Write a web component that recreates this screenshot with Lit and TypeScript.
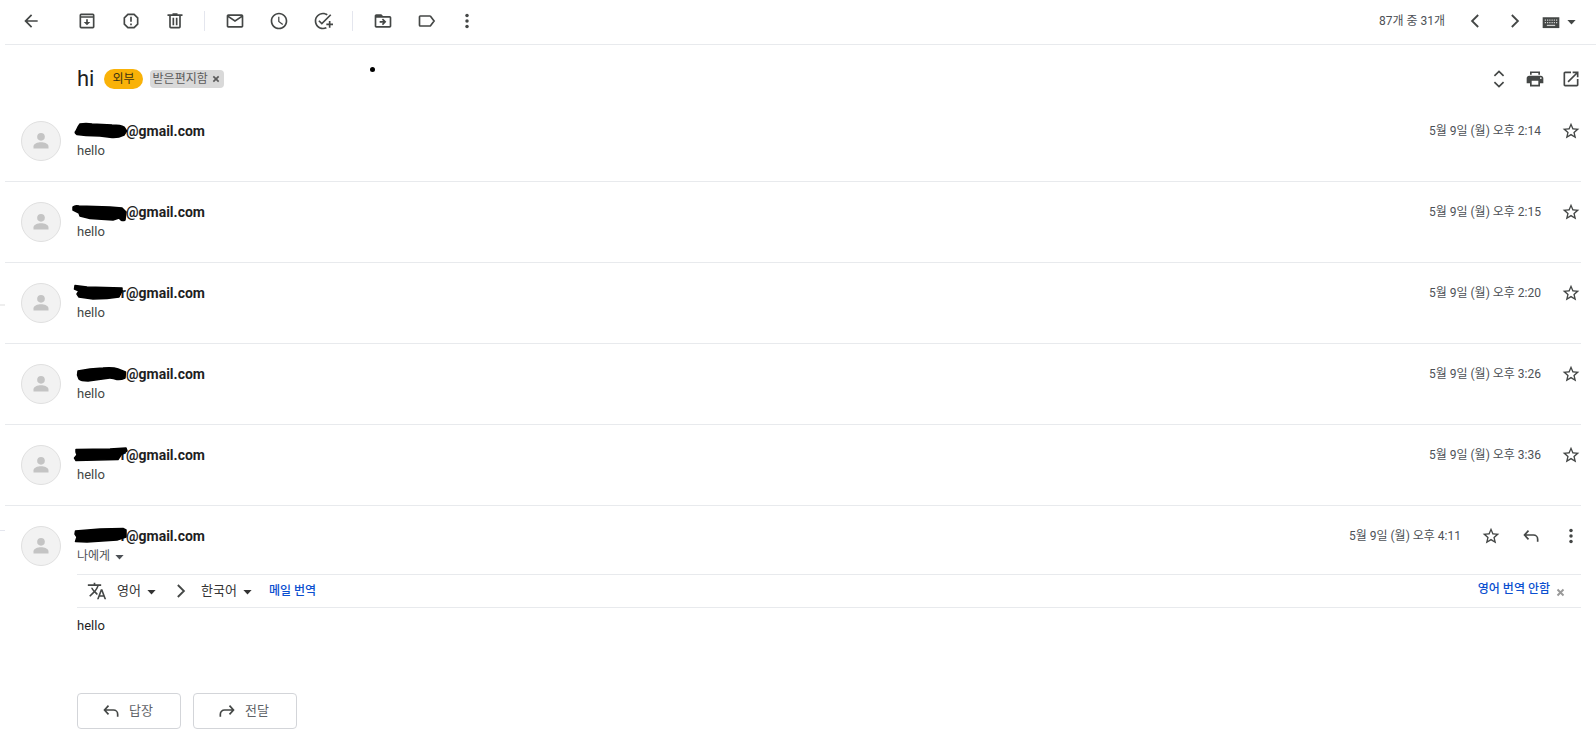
import { LitElement, html, svg, css, nothing } from "lit";
import { customElement, property } from "lit/decorators.js";

const line = (d: string, width = 2) =>
  svg`<path d=${d} fill="none" stroke="currentColor" stroke-width=${width}></path>`;
const solid = (d: string) => svg`<path d=${d} fill="currentColor"></path>`;

const ICONS: Record<string, unknown> = {
  back: solid("M20 11H7.83l5.59-5.59L12 4l-8 8 8 8 1.41-1.41L7.83 13H20v-2z"),
  archive: svg`${line("M5 4h14a1 1 0 0 1 1 1v14a1 1 0 0 1-1 1H5a1 1 0 0 1-1-1V5a1 1 0 0 1 1-1zM4 7.2h16")}
    ${solid("M11 10h2v3.2h3L12 17l-4-3.8h3z")}`,
  spam: svg`${line("M8.3 4h7.4L20 8.3v7.4L15.7 20H8.3L4 15.7V8.3z")}${solid("M11 7h2v6h-2zM11 15h2v2h-2z")}`,
  trash: svg`${line("M3 5h18M9 3.6h6M6 5v14a1 1 0 0 0 1 1h10a1 1 0 0 0 1-1V5M10 8v9M14 8v9")}`,
  mail: solid("M20 4H4c-1.1 0-2 .9-2 2v12c0 1.1.9 2 2 2h16c1.1 0 2-.9 2-2V6c0-1.1-.9-2-2-2zm-.8 2L12 10.8 4.8 6h14.4zM4 18V7.9l8 5.3 8-5.3V18H4z"),
  clock: solid("M11.99 2C6.47 2 2 6.48 2 12s4.47 10 9.99 10C17.52 22 22 17.52 22 12S17.52 2 11.99 2zM12 20c-4.42 0-8-3.58-8-8s3.58-8 8-8 8 3.58 8 8-3.58 8-8 8zm.5-13H11v6l5 3.8 1-1.3-4.5-3.3V7z"),
  task: solid("M22 5.18 10.59 16.6l-4.24-4.24 1.41-1.41 2.83 2.83 10-10L22 5.18zM12 20c-4.41 0-8-3.59-8-8s3.59-8 8-8c1.57 0 3.04.46 4.28 1.25l1.45-1.45C16.1 2.67 14.13 2 12 2 6.48 2 2 6.48 2 12s4.48 10 10 10c1.73 0 3.36-.44 4.78-1.22l-1.5-1.5c-1 .46-2.11.72-3.28.72zm7-5h-3v2h3v3h2v-3h3v-2h-3v-3h-2v3z"),
  move: svg`${solid("M20 6h-8l-2-2H4c-1.1 0-2 .9-2 2v12c0 1.1.9 2 2 2h16c1.1 0 2-.9 2-2V8c0-1.1-.9-2-2-2zm0 12H4V8h16v10z")}
    ${solid("M12 9l4 4-4 4-1.4-1.4 1.6-1.6H8v-2h4.2l-1.600-1.6z")}`,
  label: line("M4 6h11.4a1 1 0 0 1 .8.4L20.500 12l-4.3 5.6a1 1 0 0 1-.8.4H4a1 1 0 0 1-1-1V7a1 1 0 0 1 1-1z"),
  more: svg`<circle cx="12" cy="5.5" r="2.1" fill="currentColor"></circle><circle cx="12" cy="12" r="2.1" fill="currentColor"></circle><circle cx="12" cy="18.5" r="2.1" fill="currentColor"></circle>`,
  prev: line("M15.8 4.8 8.5 12l7.3 7.2", 2.2),
  next: line("M8.2 4.8 15.5 12l-7.3 7.2", 2.2),
  keyboard: svg`<path fill="currentColor" d="M2 7.5h20v13H2z"></path>
    <path d="M4.5 11h15M4.5 14h15" fill="none" stroke="#fff" stroke-opacity=".75" stroke-width="1.5" stroke-dasharray="1.5 1.2"></path>
    <path d="M7 17.3h10" stroke="#fff" stroke-opacity=".75" stroke-width="1.5"></path>`,
  expand: line("M6.5 8.2 12 2.8l5.5 5.4M6.5 15.8 12 21.2l5.5-5.4"),
  print: solid("M19 8H5c-1.66 0-3 1.34-3 3v6h4v4h12v-4h4v-6c0-1.66-1.34-3-3-3zm-3 11H8v-5h8v5zm3-7c-.55 0-1-.45-1-1s.45-1 1-1 1 .45 1 1-.45 1-1 1zM18 3H6v4h12V3zM8 4.7h8V7H8z"),
  open: solid("M19 19H5V5h7V3H5c-1.11 0-2 .9-2 2v14c0 1.1.89 2 2 2h14c1.1 0 2-.9 2-2v-7h-2v7zM14 3v2h3.59l-9.83 9.83 1.41 1.41L19 6.41V10h2V3h-7z"),
  star: solid("M22 9.24l-7.19-.62L12 2 9.19 8.63 2 9.24l5.46 4.73L5.82 21 12 17.27 18.18 21l-1.63-7.03L22 9.24zM12 15.4l-3.76 2.27 1-4.28-3.32-2.88 4.38-.38L12 6.1l1.71 4.04 4.38.38-3.32 2.88 1 4.28L12 15.4z"),
  reply: line("M9 5.5 4.2 10.8 9 16M4.2 10.8H15a5 5 0 0 1 5 5V19"),
  forward: line("M15 5.5l4.8 5.3L15 16M19.8 10.8H9a5 5 0 0 0-5 5V19"),
  translate: solid("M12.87 15.07l-2.54-2.51.03-.03c1.74-1.94 2.98-4.17 3.71-6.53H17V4h-7V2H8v2H1v1.99h11.17C11.5 7.92 10.44 9.75 9 11.35 8.07 10.32 7.3 9.19 6.69 8h-2c.73 1.63 1.73 3.17 2.98 4.56l-5.09 5.02L4 19l5-5 3.11 3.11.76-2.04zM18.5 10h-2L12 22h2l1.12-3h4.75L21 22h2l-4.5-12zm-2.62 7l1.62-4.33L19.12 17h-3.24z"),
  caret: solid("M1 8h22L12 20z"),
  close: line("M4 4l16 16M20 4 4 20", 5),
  person: svg`<circle cx="12" cy="7" r="4.6" fill="currentColor"></circle>${solid("M3 21v-2.500c0-3.300 5-5 9-5s9 1.700 9 5V21z")}`,
};

@customElement("mail-icon")
class MailIcon extends LitElement {
  @property() name = "";
  static styles = css`
    :host { display: inline-flex; width: 20px; height: 20px; flex: none; }
    .glyph { width: 100%; height: 100%; display: block; }
  `;
  render() {
    return html`<svg class="glyph" viewBox="0 0 24 24" aria-hidden="true">${ICONS[this.name]}</svg>`;
  }
}

interface Message { time: string; ink: string; tail: string; open?: boolean }

const MESSAGES: Message[] = [
  { time: "2:14", tail: "", ink: "M9 5 Q15 4 21 5L41 6Q50 6 53 8L55.5 12 53 16Q47 19 41 18.5L29 17 15 16.5 6 15.5Q3 14 5 12L7 8Z" },
  { time: "2:15", tail: "", ink: "M2 7Q4 5 8 6L39 7 51 8 55 12 54 20Q52 21 50 20L48 18 42 20 19 18.5 9 16 8 13 2 10Z" },
  { time: "2:20", tail: "r", ink: "M4 4.5 16 6 51 7V10L48 16 36 17.5 22 18 8 16 6 13 8 10 3.5 8Z" },
  { time: "3:26", tail: "", ink: "M7 9 19 7 32 6Q42 5 47 7L54.5 10 54 16Q50 18 46 17.5 40 15 35 16.5L17 19Q10 19 8 17L6.5 13Z" },
  { time: "3:36", tail: "r", ink: "M5 6.5 39 6 55 5 56 8 50 12 47 16.5 5 17.5 3.5 15 6 12 5 9Z" },
  { time: "4:11", tail: "r", open: true, ink: "M4.5 7 29 5 52 4.5 55 6V13L46 16 16 18 4.5 17.5 6 13 4 10Z" },
];

@customElement("app-root")
class AppRoot extends LitElement {
  static styles = css`
    :host {
      display: block;
      position: relative;
      box-sizing: border-box;
      padding: 0 0 10px 5px;
      background: #fff;
      color: #444746;
      font: 13px/20px Roboto, "Noto Sans CJK KR", sans-serif;
    }
    button, select {
      font: inherit;
      color: inherit;
      background: none;
      border: 0;
      margin: 0;
      padding: 0;
      cursor: pointer;
    }
    button { display: inline-flex; align-items: center; justify-content: center; }
    a { color: #0b4fd0; text-decoration: none; }
    .toolbar {
      display: flex;
      align-items: center;
      padding: 11px 15px 13px 16px;
      border-bottom: 1px solid #e8eaed;
    }
    .tools { display: flex; align-items: center; gap: 24px; }
    .tools .first { margin-right: 12px; }
    .tools .last { margin-left: -4px; }
    .rule { width: 1px; height: 20px; background: #e4e6ee; margin: 0 -4px 0 -5px; }
    .pager { display: flex; align-items: center; margin-left: auto; gap: 20px; font-size: 12px; color: #4d5156; }
    .pager button { color: #444746; }
    .keys { gap: 6px; margin: 0 5px 0 -4px; }
    .caret { width: 9px; height: 9px; }
    .subject { display: flex; align-items: center; padding: 24px 15px 12px 72px; }
    h1 { margin: 0 10px 0 0; font-size: 22px; line-height: 20px; font-weight: 400; color: #1f1f1f; }
    .external { background: #f9b208; color: #3c3312; border-radius: 10px; padding: 0 8px; font-size: 12px; }
    .inbox {
      display: flex;
      align-items: center;
      gap: 4px;
      margin-left: 7px;
      padding: 0 4px 0 3px;
      line-height: 18px;
      font-size: 12px;
      border-radius: 4px;
      background: #d9d9d9;
      color: #5c5c5c;
    }
    .x { width: 8px; height: 8px; }
    .actions { display: flex; gap: 16px; margin-left: auto; }
    .message {
      display: flex;
      gap: 16px;
      margin-right: 15px;
      padding: 20px 0 20px 16px;
      border-bottom: 1px solid #e8eaed;
    }
    .message.open { border: 0; padding-bottom: 0; }
    .avatar {
      flex: none;
      box-sizing: border-box;
      width: 40px;
      height: 40px;
      display: flex;
      align-items: center;
      justify-content: center;
      border: 1px solid #e0e0e0;
      border-radius: 50%;
      background: #f2f2f2;
      color: #c4c4c4;
    }
    .body { flex: 1; min-width: 0; }
    .head { display: flex; align-items: center; }
    .sender { display: flex; position: relative; font-size: 14px; font-weight: 700; color: #1f1f1f; }
    .hidden { width: 49px; text-align: right; }
    .ink { position: absolute; left: -6px; top: -2px; width: 60px; height: 22px; }
    .meta { display: flex; align-items: center; gap: 20px; margin-left: auto; }
    .meta time { font-size: 12px; color: #4d5156; }
    .to { font-size: 12px; gap: 5px; color: #4d5156; }
    .translate {
      display: flex;
      align-items: center;
      height: 32px;
      margin-top: 8px;
      padding: 0 16px 0 10px;
      border-top: 1px solid #e8eaed;
      border-bottom: 1px solid #e8eaed;
    }
    .lang { display: flex; align-items: center; gap: 6px; color: #333; }
    .lang select { appearance: none; }
    .from { margin-left: 10px; }
    .arrow { margin: 0 10px 0 15px; }
    .run { margin-left: 17px; font-size: 12px; font-weight: 500; }
    .never { margin-left: auto; display: flex; align-items: center; gap: 6px; padding-bottom: 4px; font-size: 12px; font-weight: 500; }
    .never .x { width: 9px; height: 9px; }
    .never button { color: #999; padding-top: 6px; }
    .text { margin: 8px 0 0; color: #1f1f1f; }
    .replies { display: flex; gap: 12px; margin-top: 57px; }
    .replies button {
      box-sizing: border-box;
      width: 104px;
      height: 36px;
      gap: 8px;
      padding-right: 4px;
      border: 1px solid #d3d5d9;
      border-radius: 4px;
      color: #5f6368;
    }
    .replies mail-icon { color: #444746; }
    .edge { position: absolute; left: 0; width: 5px; height: 1px; background: #e4e6ee; }
    .edge.upper { top: 304px; height: 2px; background: #eee; }
    .edge.lower { top: 530px; }
    .dot { position: absolute; left: 370px; top: 67px; width: 5px; height: 5px; border-radius: 50%; background: #000; }
  `;

  tool(icon: string, label: string, cls = "") {
    return html`<button class=${cls} aria-label=${label}><mail-icon name=${icon}></mail-icon></button>`;
  }

  message(m: Message) {
    return html`<article class="message ${m.open ? "open" : ""}">
      <div class="avatar"><mail-icon name="person"></mail-icon></div>
      <div class="body">
        <div class="head">
          <div class="sender">
            <span class="hidden">${m.tail}</span><span>@gmail.com</span>
            <svg class="ink" viewBox="0 0 60 22" aria-hidden="true">
              <path d=${m.ink} stroke="#000" stroke-width="1.5" stroke-linejoin="round"></path>
            </svg>
          </div>
          <div class="meta">
            <time>5월 9일 (월) 오후 ${m.time}</time>
            ${this.tool("star", "별표")}
            ${m.open ? html`${this.tool("reply", "답장")}${this.tool("more", "더보기")}` : nothing}
          </div>
        </div>
        ${m.open ? this.opened() : html`<div>hello</div>`}
      </div>
    </article>`;
  }

  opened() {
    return html`
      <button class="to">나에게<mail-icon class="caret" name="caret"></mail-icon></button>
      <div class="translate">
        <mail-icon name="translate"></mail-icon>
        <div class="lang from">
          <select aria-label="원본 언어"><option>영어</option></select>
          <mail-icon class="caret" name="caret"></mail-icon>
        </div>
        <mail-icon class="arrow" name="next"></mail-icon>
        <div class="lang">
          <select aria-label="번역 언어"><option>한국어</option></select>
          <mail-icon class="caret" name="caret"></mail-icon>
        </div>
        <a class="run" href="#">메일 번역</a>
        <div class="never">
          <a href="#">영어 번역 안함</a>
          <button aria-label="닫기"><mail-icon class="x" name="close"></mail-icon></button>
        </div>
      </div>
      <p class="text">hello</p>
      <div class="replies">
        <button><mail-icon name="reply"></mail-icon>답장</button>
        <button><mail-icon name="forward"></mail-icon>전달</button>
      </div>`;
  }

  render() {
    return html`
      <header class="toolbar">
        <div class="tools">
          ${this.tool("back", "뒤로", "first")}
          ${this.tool("archive", "보관처리")}
          ${this.tool("spam", "스팸신고")}
          ${this.tool("trash", "삭제")}
          <span class="rule"></span>
          ${this.tool("mail", "읽지않음으로 표시")}
          ${this.tool("clock", "다시 알림")}
          ${this.tool("task", "할 일에 추가")}
          <span class="rule"></span>
          ${this.tool("move", "이동")}
          ${this.tool("label", "라벨")}
          ${this.tool("more", "더보기", "last")}
        </div>
        <div class="pager">
          <span>87개 중 31개</span>
          ${this.tool("prev", "다음")}
          ${this.tool("next", "이전")}
          <button class="keys" aria-label="입력 도구">
            <mail-icon name="keyboard"></mail-icon><mail-icon class="caret" name="caret"></mail-icon>
          </button>
        </div>
      </header>
      <div class="subject">
        <h1>hi</h1>
        <span class="external">외부</span>
        <span class="inbox">받은편지함<button aria-label="라벨 삭제"><mail-icon class="x" name="close"></mail-icon></button></span>
        <div class="actions">
          ${this.tool("expand", "모두 펼치기")}${this.tool("print", "인쇄")}${this.tool("open", "새 창")}
        </div>
      </div>
      <main>${MESSAGES.map((m) => this.message(m))}</main>
      <span class="edge upper"></span>
      <span class="edge lower"></span>
      <span class="dot"></span>
    `;
  }
}
